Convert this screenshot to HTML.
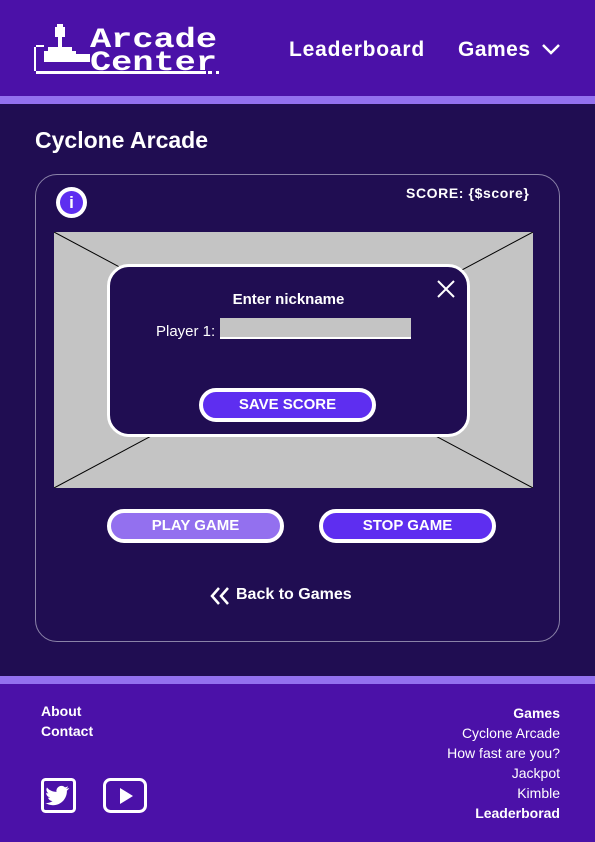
<!DOCTYPE html>
<html><head><meta charset="utf-8"><style>
*{margin:0;padding:0;box-sizing:border-box}
body{width:595px;height:842px;background:#200d52;font-family:"Liberation Sans",sans-serif;color:#fff;position:relative;overflow:hidden}
.a{position:absolute}
.b{font-weight:bold}
header{position:absolute;left:0;top:0;width:595px;height:96px;background:#4b11a8}
.stripe{position:absolute;left:0;width:595px;height:8px;background:#9370ef}
.btn{position:absolute;height:34px;border:4px solid #fff;border-radius:17px;font-weight:bold;font-size:15px;text-align:center;line-height:26px}
footer{position:absolute;left:0;top:684px;width:595px;height:158px;background:#4b11a8;font-size:14px}
</style></head><body>
<header>
<svg class="a" style="left:32px;top:22px" width="190" height="54" viewBox="0 0 190 54">
<g fill="#fff">
<rect x="25" y="2" width="6" height="3"/><rect x="23" y="5" width="10" height="10"/><rect x="26" y="15" width="4" height="10"/>
<rect x="16" y="25" width="24" height="4"/><rect x="12" y="29" width="32" height="3"/><rect x="12" y="32" width="46" height="8"/>
<rect x="2" y="25" width="2" height="16"/><rect x="4" y="23" width="8" height="2"/><rect x="4" y="49" width="170" height="3"/>
<rect x="2" y="41" width="2" height="8"/>
<rect x="168" y="49" width="4" height="3"/><rect x="176" y="49" width="4" height="3"/><rect x="184" y="49" width="3" height="3"/>
</g>
<text x="58" y="25" textLength="127" lengthAdjust="spacingAndGlyphs" font-family="Liberation Mono,monospace" font-weight="bold" font-size="28" fill="#fff">Arcade</text>
<text x="58" y="48" textLength="127" lengthAdjust="spacingAndGlyphs" font-family="Liberation Mono,monospace" font-weight="bold" font-size="28" fill="#fff">Center</text>
</svg>
<div class="a b" style="left:289px;top:38px;font-size:21px;letter-spacing:0.8px">Leaderboard</div>
<div class="a b" style="left:458px;top:38px;font-size:21px;letter-spacing:0.5px">Games</div>
<svg class="a" style="left:541px;top:43px" width="20" height="12"><path d="M2 2l8 8 8-8" stroke="#fff" stroke-width="2.5" fill="none"/></svg>
</header>
<div class="stripe" style="top:96px"></div>
<div class="a b" style="left:35px;top:127px;font-size:23px">Cyclone Arcade</div>
<div class="a" style="left:35px;top:174px;width:525px;height:468px;border:1px solid #8a82a8;border-radius:22px"></div>
<div class="a" style="left:56px;top:187px;width:31px;height:31px;border-radius:50%;background:#fff"></div>
<div class="a" style="left:60px;top:191px;width:23px;height:23px;border-radius:50%;background:#5e2ef0;text-align:center;font-weight:bold;font-size:17px;line-height:23px">i</div>
<div class="a b" style="left:406px;top:185px;font-size:14px;letter-spacing:0.6px">SCORE: {$score}</div>
<svg class="a" style="left:54px;top:232px" width="479" height="256"><rect width="479" height="256" fill="#c4c4c4"/><path d="M0 0L479 256M479 0L0 256" stroke="#000" stroke-width="1"/></svg>
<div class="a" style="left:107px;top:264px;width:363px;height:173px;background:#200d52;border:3px solid #fff;border-radius:22px"></div>
<svg class="a" style="left:437px;top:280px" width="18" height="18"><path d="M1 1l16 16M17 1L1 17" stroke="#fff" stroke-width="2"/></svg>
<div class="a b" style="left:107px;width:363px;text-align:center;top:291px;font-size:15px">Enter nickname</div>
<div class="a" style="left:156px;top:323px;font-size:15px">Player 1:</div>
<div class="a" style="left:220px;top:318px;width:191px;height:21px;background:#c4c4c4;border-bottom:2px solid #fff"></div>
<div class="btn" style="left:199px;top:388px;width:177px;background:#5e2ef0">SAVE SCORE</div>
<div class="btn" style="left:107px;top:509px;width:177px;background:#9370ef">PLAY GAME</div>
<div class="btn" style="left:319px;top:509px;width:177px;background:#5e2ef0">STOP GAME</div>
<svg class="a" style="left:209px;top:586px" width="24" height="20"><path d="M10 2L3 10l7 8M19 2l-7 8 7 8" stroke="#fff" stroke-width="2.5" fill="none"/></svg>
<div class="a b" style="left:236px;top:586px;font-size:16px">Back to Games</div>
<div class="stripe" style="top:676px"></div>
<footer>
<div class="a b" style="left:41px;top:19px">About</div>
<div class="a b" style="left:41px;top:39px">Contact</div>
<div class="a" style="right:35px;top:19px;text-align:right;line-height:20px"><b>Games</b><br>Cyclone Arcade<br>How fast are you?<br>Jackpot<br>Kimble<br><b>Leaderborad</b></div>
<svg class="a" style="left:41px;top:94px" width="36" height="36"><rect x="1.5" y="1.5" width="32" height="32" rx="3" fill="none" stroke="#fff" stroke-width="3"/><path d="M28 10c-1 .5-2 .7-3 .8 1-.6 1.8-1.5 2-2.6-1 .6-2 1-3 1.2a5 5 0 0 0-8.5 4.5C11 13.7 8 12 6 9.5c-1.2 2-.5 4.5 1.4 5.8-.8 0-1.5-.2-2.2-.6 0 2.4 1.7 4.3 4 4.8-.7.2-1.5.2-2.2.1.6 2 2.5 3.4 4.6 3.4-2 1.6-4.6 2.3-7.2 2 2.2 1.4 4.8 2.2 7.5 2.2 9 0 14-7.5 14-14v-.6c1-.7 1.7-1.5 2.3-2.5z" fill="#fff"/></svg>
<svg class="a" style="left:103px;top:94px" width="45" height="36"><rect x="1.5" y="1.5" width="41" height="32" rx="6" fill="none" stroke="#fff" stroke-width="3"/><path d="M17 10v16l13-8z" fill="#fff"/></svg>
</footer>
</body></html>
